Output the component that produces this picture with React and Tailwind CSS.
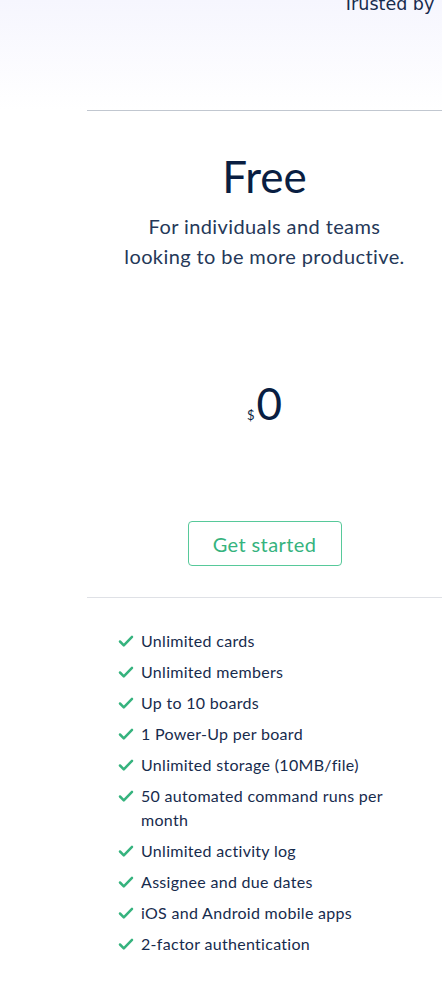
const features = [
  "Unlimited cards",
  "Unlimited members",
  "Up to 10 boards",
  "1 Power-Up per board",
  "Unlimited storage (10MB/file)",
  "50 automated command runs per month",
  "Unlimited activity log",
  "Assignee and due dates",
  "iOS and Android mobile apps",
  "2-factor authentication",
];

function Check() {
  return (
    <svg viewBox="0 0 16 16" className="w-[16px] h-[16px] shrink-0 mt-[4px]" fill="none">
      <path d="M2 8.5l3.8 3.8L14 3.8" stroke="#36b37e" strokeWidth="2.5" strokeLinecap="round" strokeLinejoin="round" />
    </svg>
  );
}

function App() {
  return (
    <div className="w-[442px] min-h-[999px] bg-white overflow-hidden font-['Lato','Noto_Sans',sans-serif] text-[#172b4d]">
      <div className="flow-root h-[110px] bg-gradient-to-b from-[#f6f6fe] to-white">
        <div className="pl-[343px] -mt-[8px] whitespace-nowrap font-['DejaVu_Sans',sans-serif] text-[17.5px] leading-[24px] text-[#172b4d]">
          Trusted by
        </div>
      </div>
      <div className="ml-[87px] w-[355px]">
        <div className="border-t border-[#c1c7d0] flex flex-col items-center">
          <h2 className="mt-[39px] text-[44px] leading-[52px] font-normal text-[#091e42]">Free</h2>
          <p className="mt-[9px] text-[20px] leading-[30px] text-center text-[#253858] tracking-[0.4px]">
            For individuals and teams
            <br />
            looking to be more productive.
          </p>
          <div className="mt-[110px] flex items-end text-[#091e42]">
            <span className="text-[13px] leading-[14px] mb-[3px] mr-[2px]">$</span>
            <span className="text-[44px] leading-[44px]">0</span>
          </div>
          <button className="mt-[96px] w-[154px] h-[45px] border border-[#57c99a] rounded-[4px] text-[20px] text-[#36b37e] tracking-[0.4px]">
            Get started
          </button>
          <div className="h-[31px]" />
        </div>
        <div className="border-t border-[#dfe1e6] pt-[31px] pl-[31px] pr-[40px]">
          <ul className="flex flex-col gap-[7px]">
            {features.map((f) => (
              <li key={f} className="flex gap-[7px] text-[16px] leading-[24px] tracking-[0.3px] text-[#172b4d]">
                <Check />
                <span>{f}</span>
              </li>
            ))}
          </ul>
        </div>
      </div>
    </div>
  );
}

export default App;
